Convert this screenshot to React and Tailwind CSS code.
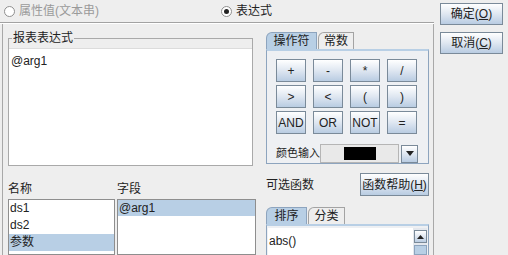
import React from 'react';

const font = { fontFamily: '"Liberation Sans", "Noto Sans CJK SC", sans-serif' };

const btn = 'flex items-center justify-center border border-[#7a8a99] bg-gradient-to-b from-white via-[#dfe7f1] to-[#b9cce2] text-[12px] text-[#222]';

function Radio({ checked, label, disabled }) {
  return (
    <div className={`flex items-center gap-[4px] text-[12px] ${disabled ? 'text-[#9a9a9a]' : 'text-[#222]'}`}>
      <span className="w-[11px] h-[11px] rounded-full border border-[#8f8f8f] bg-white flex items-center justify-center">
        {checked && <span className="w-[5px] h-[5px] rounded-full bg-[#222]" />}
      </span>
      <span>{label}</span>
    </div>
  );
}

function Tab({ label, selected, w }) {
  return (
    <div
      className={`h-[17px] flex items-center justify-center text-[12px] text-[#222] border border-b-0 rounded-tl-[6px] ${
        selected ? 'bg-[#b8cfe5] border-[#8da4be]' : 'bg-[#eeeeee] border-[#a3a3a3]'
      }`}
      style={{ width: w }}
    >
      {label}
    </div>
  );
}

function Key({ label }) {
  return <div className={`${btn} w-[30px] h-[23px] text-[11px]`}>{label}</div>;
}

export default function App() {
  const keys = ['+', '-', '*', '/', '>', '<', '(', ')', 'AND', 'OR', 'NOT', '='];
  return (
    <div className="w-[508px] h-[255px] bg-[#eeeeee] flex overflow-hidden" style={font}>
      {/* left main area */}
      <div className="w-[434px] flex flex-col">
        <div className="h-[22px] flex items-center pl-[4px]">
          <div className="w-[217px]">
            <Radio label="属性值(文本串)" disabled />
          </div>
          <Radio label="表达式" checked />
        </div>
        <div className="h-[1px] bg-[#a2a2a2]" />
        <div className="h-[1px] bg-white" />
        <div className="flex-1 ml-[2px] w-[432px] border-x border-[#a8a8a8] flex pl-[5px] min-h-0">
          {/* left sub column */}
          <div className="w-[248px] flex flex-col pt-[8px]">
            <fieldset className="w-[245px] border border-[#a9a9a9] px-0">
              <legend className="ml-[3px] px-[1px] text-[12px] leading-[12px] text-[#222]">报表表达式</legend>
              <div className="mt-[4px] h-[117px] bg-white border-t border-[#dcdcdc] px-[2px] pt-[3px] text-[12px] text-[#222]">
                @arg1
              </div>
            </fieldset>
            <div className="mt-[16px] flex text-[12px] text-[#222] h-[14px] leading-[14px]">
              <div className="w-[109px]">名称</div>
              <div>字段</div>
            </div>
            <div className="mt-[3px] flex gap-[2px] flex-1">
              <div className="w-[107px] bg-white border border-[#8e8e8e] text-[12px] text-[#222]">
                <div className="h-[17px] leading-[17px] pl-[1px]">ds1</div>
                <div className="h-[17px] leading-[17px] pl-[1px]">ds2</div>
                <div className="h-[17px] leading-[17px] pl-[1px] bg-[#b8cfe5]">参数</div>
              </div>
              <div className="w-[139px] bg-white border border-[#8e8e8e] text-[12px] text-[#222]">
                <div className="h-[16px] leading-[16px] pl-[1px] bg-[#b8cfe5]">@arg1</div>
              </div>
            </div>
          </div>
          {/* right sub column */}
          <div className="ml-[10px] w-[163px] flex flex-col pt-[8px]">
            <div className="flex gap-[1px]">
              <Tab label="操作符" selected w={51} />
              <Tab label="常数" w={36} />
            </div>
            <div className="h-[119px] border border-[#8da4be] border-t-[2px] border-t-[#b8cfe5] bg-[#eef0f3] pl-[9px] pt-[8px]">
              <div className="grid grid-cols-[30px_30px_30px_30px] gap-x-[7px] gap-y-[3px]">
                {keys.map((k) => (
                  <Key key={k} label={k} />
                ))}
              </div>
              <div className="mt-[10px] flex items-center text-[#222]">
                <span className="w-[44px] shrink-0 whitespace-nowrap text-[11px]">颜色输入</span>
                <div className="w-[79px] h-[19px] border border-[#b5b5b5] bg-[#e9e9e9] flex items-center justify-center">
                  <div className="w-[32px] h-[13px] bg-black" />
                </div>
                <div className={`${btn} ml-[2px] w-[17px] h-[18px]`}>
                  <svg width="8" height="5" viewBox="0 0 8 5">
                    <path d="M0 0 L8 0 L4 5 Z" fill="#222" />
                  </svg>
                </div>
              </div>
            </div>
            <div className="mt-[9px] flex items-center justify-between">
              <span className="text-[12px] text-[#222]">可选函数</span>
              <div className={`${btn} w-[69px] h-[23px]`}>
                函数帮助(<span className="underline">H</span>)
              </div>
            </div>
            <div className="mt-[11px] flex gap-[1px]">
              <Tab label="排序" selected w={41} />
              <Tab label="分类" w={37} />
            </div>
            <div className="flex-1 border border-[#8da4be] border-t-[2px] border-t-[#b8cfe5] bg-[#eef0f3] pl-[1px] pr-[1px] pt-[2px] flex">
              <div className="flex-1 bg-white text-[12px] text-[#222] pl-[1px] pt-[4px]">abs()</div>
              <div className="w-[14px] bg-[#e4e8ee] flex flex-col items-center pt-[2px]">
                <div className={`${btn} w-[13px] h-[13px]`}>
                  <svg width="7" height="4" viewBox="0 0 7 4">
                    <path d="M0 4 L7 4 L3.5 0 Z" fill="#222" />
                  </svg>
                </div>
                <div className="mt-[2px] w-[13px] h-[10px] border border-[#8da4be] bg-[#b8cfe5]" />
              </div>
            </div>
          </div>
        </div>
      </div>
      {/* right buttons */}
      <div className="flex-1 pl-[6px] pt-[3px] flex flex-col gap-[7px]">
        <div className={`${btn} w-[63px] h-[22px]`}>
          确定(<span className="underline">O</span>)
        </div>
        <div className={`${btn} w-[63px] h-[22px]`}>
          取消(<span className="underline">C</span>)
        </div>
      </div>
    </div>
  );
}
